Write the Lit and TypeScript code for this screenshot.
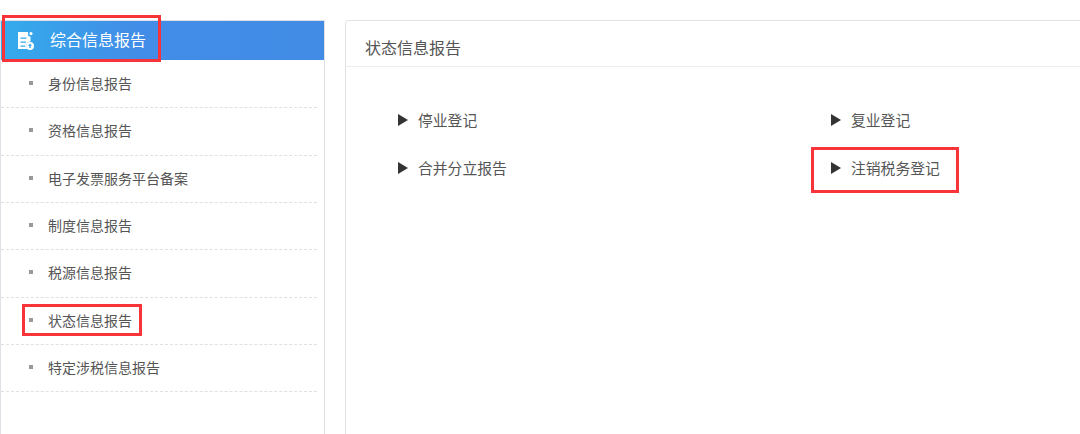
import { LitElement, html, css } from 'lit';
import { customElement } from 'lit/decorators.js';

const menu = [
  '身份信息报告',
  '资格信息报告',
  '电子发票服务平台备案',
  '制度信息报告',
  '税源信息报告',
  '状态信息报告',
  '特定涉税信息报告',
];

const links = ['停业登记', '复业登记', '合并分立报告', '注销税务登记'];

@customElement('app-root')
export class AppRoot extends LitElement {
  static styles = css`
    :host {
      display: block;
      position: relative;
      width: 1080px;
      height: 434px;
      overflow: hidden;
      background: #fff;
      font-family: 'Noto Sans CJK SC', 'Liberation Sans', sans-serif;
    }

    .page {
      display: flex;
      align-items: flex-start;
      gap: 20px;
      padding: 20px 0 0 0;
    }

    .sidebar {
      flex: none;
      box-sizing: border-box;
      width: 325px;
      height: 440px;
      border: 1px solid #dfdfe6;
      border-bottom: 0;
    }

    .sidebar-head {
      box-sizing: border-box;
      display: flex;
      align-items: center;
      height: 39px;
      padding: 0 0 3px 17px;
      gap: 16px;
      color: #fff;
      font-size: 16px;
      background: linear-gradient(90deg, #34abec 0, #428de7 42%, #428ce6 100%);
    }

    .sidebar-head svg {
      flex: none;
      margin-top: 3px;
    }

    .menu {
      list-style: none;
      margin: 1px 7px 0 0;
      padding: 0;
    }

    .menu li {
      box-sizing: border-box;
      display: flex;
      align-items: center;
      height: 47.33px;
      padding: 0 0 2px 28px;
      gap: 15px;
      font-size: 14px;
      color: #555;
      border-bottom: 1px dashed #e0e0e0;
    }

    .bullet {
      flex: none;
      width: 4px;
      height: 4px;
      background: #999;
    }

    .panel {
      flex: none;
      box-sizing: border-box;
      width: 760px;
      height: 440px;
      border: 1px solid #e3e3e3;
      border-radius: 3px 0 0 0;
    }

    .panel-head {
      box-sizing: border-box;
      height: 46px;
      line-height: 53px;
      padding-left: 19px;
      font-size: 16px;
      color: #555;
      border-bottom: 1px solid #eee;
    }

    .links {
      display: grid;
      grid-template-columns: 433px 1fr;
      grid-auto-rows: 47.5px;
      padding: 29px 0 0 52px;
    }

    .link {
      display: flex;
      align-items: center;
      gap: 10px;
      font-size: 14.8px;
      color: #555;
    }

    .arrow {
      flex: none;
      width: 0;
      height: 0;
      margin-top: 1px;
      border-style: solid;
      border-width: 6px 0 6px 10px;
      border-color: transparent transparent transparent #333;
    }

    .mark {
      position: absolute;
      box-sizing: border-box;
      border: 3px solid #f6343a;
    }

    .mark-head {
      left: 2px;
      top: 15px;
      width: 159px;
      height: 47px;
    }

    .mark-menu {
      left: 22px;
      top: 304px;
      width: 120px;
      height: 32px;
    }

    .mark-link {
      left: 811px;
      top: 147px;
      width: 148px;
      height: 46px;
    }
  `;

  render() {
    return html`
      <div class="page">
        <aside class="sidebar">
          <div class="sidebar-head">
            <svg width="16" height="18" viewBox="0 0 16 18">
              <path
                fill="#fff"
                fill-rule="evenodd"
                d="M0 0h10v2.5a2 2 0 0 0 2.5 2V9.5a4.4 4.4 0 0 0-3.4 7.5H0zM2.5 5.5v1.2h6V5.5zm0 4v1.2h5.5V9.5zm0 4v1.2h4.5v-1.2z"
              />
              <circle cx="13" cy="1.6" r="1.6" fill="#fff" />
              <path
                fill="#fff"
                fill-rule="evenodd"
                d="M12 10a4 4 0 1 1 0 8 4 4 0 0 1 0-8zm0 1.6L10 13.8h1.3V16h1.4v-2.2H14z"
              />
            </svg>
            <span>综合信息报告</span>
          </div>
          <ul class="menu">
            ${menu.map(
              (name) => html`<li><i class="bullet"></i><span>${name}</span></li>`,
            )}
          </ul>
        </aside>
        <section class="panel">
          <div class="panel-head">状态信息报告</div>
          <div class="links">
            ${links.map(
              (name) => html`<div class="link"><i class="arrow"></i><span>${name}</span></div>`,
            )}
          </div>
        </section>
      </div>
      <div class="mark mark-head"></div>
      <div class="mark mark-menu"></div>
      <div class="mark mark-link"></div>
    `;
  }
}
